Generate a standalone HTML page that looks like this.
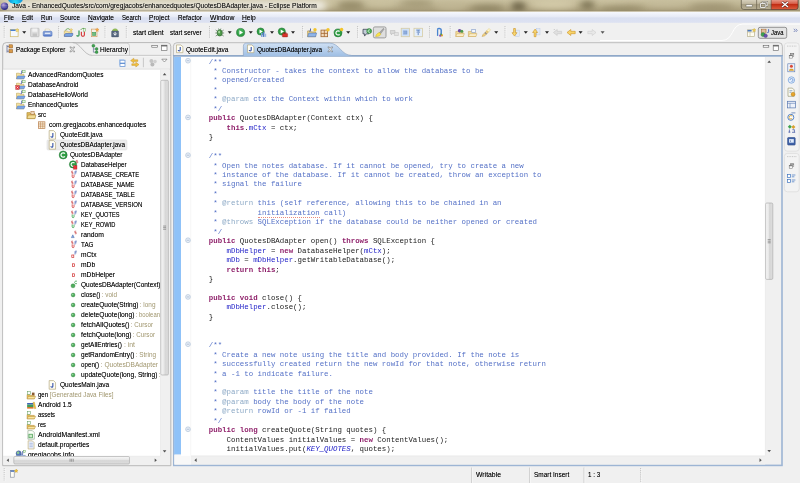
<!DOCTYPE html><html><head><meta charset="utf-8"><title>Java - Eclipse Platform</title><style>
html,body{margin:0;padding:0;}
body{width:800px;height:483px;overflow:hidden;background:#f0f0f0;font-family:"Liberation Sans",sans-serif;font-size:7.5px;color:#000;position:relative;}
.a{position:absolute;}
.t{position:absolute;white-space:pre;line-height:10px;height:10px;transform-origin:0 50%;font-size:7.5px;text-shadow:0 0 .5px rgba(0,0,0,.45);}
#ov{position:absolute;left:0;top:0;}
.code{opacity:.9;position:absolute;font-family:"Liberation Mono",monospace;font-size:7.4px;line-height:9.45px;white-space:pre;color:#000;}
.c{color:#3f5fbf;} .jt{color:#7f9fbf;} .k{color:#7f0055;font-weight:bold;} .f{color:#0000c0;} .sf{color:#0000c0;font-style:italic;}
.sp{border-bottom:0.6px dotted #e88070;}
u{text-decoration:underline;text-decoration-thickness:.5px;text-underline-offset:.8px;text-decoration-color:#444}
</style></head><body>
<div class="a" style="left:0;top:0;width:800px;height:12px;background:linear-gradient(#c9c09f 0%,#bdb391 40%,#aba07e 80%);overflow:hidden;">
<div class="a" style="left:338px;top:1px;width:26px;height:9px;background:#8d8360;border-radius:50%;filter:blur(3px);opacity:0.8"></div>
<div class="a" style="left:300px;top:0px;width:36px;height:8px;background:#d2c9a8;border-radius:50%;filter:blur(3px);opacity:0.8"></div>
<div class="a" style="left:366px;top:0px;width:30px;height:7px;background:#cfc6a4;border-radius:50%;filter:blur(3px);opacity:0.8"></div>
<div class="a" style="left:400px;top:0px;width:34px;height:6px;background:#8f8562;border-radius:50%;filter:blur(3px);opacity:0.7"></div>
<div class="a" style="left:436px;top:2px;width:30px;height:9px;background:#c4ba98;border-radius:50%;filter:blur(3px);opacity:0.7"></div>
<div class="a" style="left:470px;top:5px;width:34px;height:7px;background:#857b5a;border-radius:50%;filter:blur(3px);opacity:0.8"></div>
<div class="a" style="left:511px;top:2px;width:15px;height:9px;background:#665d42;border-radius:50%;filter:blur(3px);opacity:0.9"></div>
<div class="a" style="left:530px;top:0px;width:46px;height:9px;background:#d8cfae;border-radius:50%;filter:blur(3px);opacity:0.85"></div>
<div class="a" style="left:580px;top:1px;width:15px;height:8px;background:#716849;border-radius:50%;filter:blur(3px);opacity:0.85"></div>
<div class="a" style="left:598px;top:0px;width:30px;height:5px;background:#cfc6a4;border-radius:50%;filter:blur(3px);opacity:0.7"></div>
<div class="a" style="left:600px;top:6px;width:44px;height:6px;background:#8d8360;border-radius:50%;filter:blur(3px);opacity:0.8"></div>
<div class="a" style="left:646px;top:0px;width:40px;height:7px;background:#c8bf9e;border-radius:50%;filter:blur(3px);opacity:0.7"></div>
<div class="a" style="left:690px;top:3px;width:44px;height:8px;background:#968b6a;border-radius:50%;filter:blur(3px);opacity:0.7"></div>
<div class="a" style="left:4px;top:1px;width:322px;height:10px;background:#fff;border-radius:5px;filter:blur(3.5px);opacity:.74"></div>
<div class="a" style="left:7.6px;top:-7px;width:15.4px;height:10.8px;border-radius:50%;background:radial-gradient(ellipse at 50% 85%,#22dcf8 0,#14a8e4 45%,#0e78c4 100%);filter:blur(.5px)"></div>
</div>
<svg id="ov" width="800" height="483" viewBox="0 0 800 483">
<path d="M0.00 10.90L800.00 10.90" stroke="#8f8668" stroke-width="1" fill="none" opacity=".5"/>
<path d="M0.00 11.70L800.00 11.70" stroke="#ece8da" stroke-width="0.7" fill="none"/>
<defs><radialGradient id="eg" cx=".35" cy=".3" r=".75"><stop offset="0" stop-color="#b8a0d8"/><stop offset=".5" stop-color="#5a54a8"/><stop offset="1" stop-color="#26267e"/></radialGradient></defs>
<g transform="translate(0.00 1.20)"><circle cx="4.5" cy="5" r="3.7" fill="url(#eg)"/><rect x="1.4" y="4.4" width="6.2" height=".5" fill="#d8d8f0" opacity=".55"/><rect x="1.4" y="5.6" width="6.2" height=".5" fill="#d8d8f0" opacity=".45"/></g>
<defs><linearGradient id="wb" x1="0" y1="0" x2="0" y2="1"><stop offset="0" stop-color="#ddd7c4"/><stop offset=".5" stop-color="#bcb39a"/><stop offset=".52" stop-color="#a69d82"/><stop offset="1" stop-color="#b8af95"/></linearGradient><linearGradient id="wc" x1="0" y1="0" x2="0" y2="1"><stop offset="0" stop-color="#e8a898"/><stop offset=".5" stop-color="#d5533c"/><stop offset=".52" stop-color="#c22c14"/><stop offset="1" stop-color="#dc6040"/></linearGradient></defs>
<path d="M741.3 -1 H798 V7 Q798 9.5 795.5 9.5 H743.8 Q741.3 9.5 741.3 7Z" fill="url(#wb)" stroke="#5a5443" stroke-width=".7"/>
<path d="M771.2 -1 H798 V7 Q798 9.5 795.5 9.5 H771.2Z" fill="url(#wc)" stroke="#5a3a30" stroke-width=".6"/>
<path d="M756.60 0.00L756.60 9.50" stroke="#6a634f" stroke-width="0.7" fill="none"/>
<g transform="translate(741.00 0.00)"><rect x="5" y="4.6" width="6.4" height="2.2" rx=".4" fill="#fff" stroke="#55503f" stroke-width=".5"/><rect x="21.6" y="2" width="4.6" height="3.8" fill="none" stroke="#55503f" stroke-width="1.6"/><rect x="21.6" y="2" width="4.6" height="3.8" fill="none" stroke="#fff" stroke-width=".9"/><rect x="19.6" y="3.6" width="4.6" height="3.8" fill="#b5ac92" stroke="#55503f" stroke-width="1.6"/><rect x="19.6" y="3.6" width="4.6" height="3.8" fill="none" stroke="#fff" stroke-width=".9"/><path d="M41 2 L47 7 M47 2 L41 7" stroke="#5a2018" stroke-width="2.3"/><path d="M41 2 L47 7 M47 2 L41 7" stroke="#fff" stroke-width="1.4"/></g>
<defs><linearGradient id="mb" x1="0" y1="0" x2="0" y2="1"><stop offset="0" stop-color="#f6f8fd"/><stop offset=".45" stop-color="#e6eaf6"/><stop offset=".55" stop-color="#d9dff0"/><stop offset="1" stop-color="#dde2f2"/></linearGradient></defs>
<rect x="0.00" y="12.00" width="800.00" height="10.80" fill="url(#mb)"/>
<path d="M4.20 26.00L4.20 38.00" stroke="#bdbdbd" stroke-width="1" stroke-dasharray=".95 .95" fill="none"/>
<path d="M5.10 26.80L5.10 38.80" stroke="#fdfdfd" stroke-width="0.8" stroke-dasharray=".95 .95" fill="none"/>
<g transform="translate(9.80 27.50)"><rect x=".5" y="2" width="7.8" height="7.2" fill="#f4f8fd" stroke="#d0b868" stroke-width=".7"/><rect x=".6" y="2" width="5.2" height="1.5" fill="#4a80d0"/><path d="M7.4 .8 L7.9 2 L9.2 2.2 L8.2 3.1 L8.5 4.4 L7.4 3.7 L6.3 4.4 L6.6 3.1 L5.6 2.2 L6.9 2Z" fill="#f8e080" stroke="#c8a83c" stroke-width=".35"/></g>
<g transform="translate(22.20 31.30)"><path d="M0 0H4L2 2.4Z" fill="#222"/></g>
<g transform="translate(29.80 27.50)"><rect x=".8" y=".8" width="8.4" height="8.4" rx=".6" fill="#dcdcdc" stroke="#b8b8b8" stroke-width=".7"/><rect x="2.5" y="1" width="5" height="3.2" fill="#f2f2f2"/><rect x="2.8" y="6" width="4.4" height="3" fill="#c4c4c4"/></g>
<g transform="translate(42.60 27.50)"><path d="M2.6 4 V1.6 H6.6 L7.6 2.6 V4Z" fill="#fbfbf4" stroke="#c8b880" stroke-width=".4"/><rect x=".6" y="3.8" width="8.8" height="5" rx="1.2" fill="#86a4de" stroke="#4f72c0" stroke-width=".6"/><rect x="2" y="4.8" width="6" height="2" fill="#dfe8f8" stroke="#6a88c8" stroke-width=".4"/><rect x=".9" y="7.4" width="8.2" height="1.2" fill="#5a7cc8"/></g>
<path d="M58.60 26.00L58.60 38.00" stroke="#bdbdbd" stroke-width="1" stroke-dasharray=".95 .95" fill="none"/>
<path d="M59.50 26.80L59.50 38.80" stroke="#fdfdfd" stroke-width="0.8" stroke-dasharray=".95 .95" fill="none"/>
<g transform="translate(63.50 27.50)"><path d="M.8 3.4 H3.8 L4.6 4.4 H8.4 V8.8 H.8Z" fill="#f4e4a4" stroke="#c0a050" stroke-width=".5"/><path d="M.8 8.9 C.8 6.8 1.6 6 2.4 6 H9.4 C9.4 8 8.6 8.9 7.8 8.9Z" fill="#7aa4e4" stroke="#3a5aa8" stroke-width=".55"/><path d="M2 3 C2.6 .8 5.6 .6 6.4 2.2" fill="none" stroke="#5aa048" stroke-width=".8"/><path d="M7.6 .8 L8 1.9 L9.2 2 L8.3 2.8 L8.6 4 L7.6 3.4 L6.6 4 L6.9 2.8 L6 2 L7.2 1.9Z" fill="#f8dc70" stroke="#c8a030" stroke-width=".3"/></g>
<g transform="translate(76.20 27.50)"><path d="M2.8 3 V7.4 C2.8 9 .8 9 .6 7.6" fill="none" stroke="#3a9a57" stroke-width="1.3"/><path d="M5.2 4.2 V7.6 C5.2 9.2 8.2 9.2 8.2 7.6 V4.2" fill="none" stroke="#d64141" stroke-width="1.2"/><path d="M4.5 2.5 C5.5 .6 7.6 .5 8.6 1.5" fill="none" stroke="#4d9a3b" stroke-width=".7"/><rect x="7.6" y="1" width="2" height="3" fill="#e6f2e6" stroke="#4d9a3b" stroke-width=".4"/></g>
<g transform="translate(89.80 27.50)"><rect x="1.6" y="1.6" width="5.6" height="7.6" fill="#f4f0e6" stroke="#d09858" stroke-width=".6"/><rect x="2.8" y="4.8" width="3.2" height="3.2" fill="#6cc080" stroke="#3a9050" stroke-width=".5"/><path d="M7.4 .4 L7.9 1.6 L9.2 1.8 L8.2 2.7 L8.5 4 L7.4 3.3 L6.3 4 L6.6 2.7 L5.6 1.8 L6.9 1.6Z" fill="#f8a84a" stroke="#d08020" stroke-width=".3"/></g>
<path d="M105.00 26.00L105.00 38.00" stroke="#bdbdbd" stroke-width="1" stroke-dasharray=".95 .95" fill="none"/>
<path d="M105.90 26.80L105.90 38.80" stroke="#fdfdfd" stroke-width="0.8" stroke-dasharray=".95 .95" fill="none"/>
<g transform="translate(110.00 27.50)"><path d="M2.4 3.4 C2.4 .6 7.8 .6 7.8 3.4Z" fill="#9ac45a" stroke="#6a9a3a" stroke-width=".4"/><rect x="1.6" y="3.6" width="7" height="5.8" rx=".5" fill="#586880" stroke="#3a4860" stroke-width=".4"/><path d="M5.1 4.4 V7 M3.6 6 L5.1 7.8 L6.6 6" fill="none" stroke="#f4f4f4" stroke-width="1"/></g>
<path d="M126.30 26.00L126.30 38.00" stroke="#bdbdbd" stroke-width="1" stroke-dasharray=".95 .95" fill="none"/>
<path d="M127.20 26.80L127.20 38.80" stroke="#fdfdfd" stroke-width="0.8" stroke-dasharray=".95 .95" fill="none"/>
<path d="M209.50 26.00L209.50 38.00" stroke="#bdbdbd" stroke-width="1" stroke-dasharray=".95 .95" fill="none"/>
<path d="M210.40 26.80L210.40 38.80" stroke="#fdfdfd" stroke-width="0.8" stroke-dasharray=".95 .95" fill="none"/>
<g transform="translate(214.70 27.50)"><ellipse cx="5" cy="5.4" rx="2.6" ry="3.2" fill="#4f9a4a" stroke="#2a5f2a" stroke-width=".5"/><path d="M1 2.5 L3 4 M9 2.5 L7 4 M.6 5.5 H2.5 M9.4 5.5 H7.5 M1 8.6 L3 7.2 M9 8.6 L7 7.2 M3.8 1 L4.4 2.4 M6.2 1 L5.6 2.4" stroke="#3a5f3a" stroke-width=".6"/><ellipse cx="4.4" cy="4.6" rx="1" ry="1.3" fill="#a8d8a0"/></g>
<g transform="translate(227.70 31.30)"><path d="M0 0H4L2 2.4Z" fill="#222"/></g>
<g transform="translate(235.60 27.50)"><circle cx="5" cy="5" r="4.1" fill="#2f9e44" stroke="#1b6d2c" stroke-width=".5"/><circle cx="5" cy="4" r="3" fill="#58c06a" opacity=".5"/><path d="M3.8 2.8 L7.4 5 L3.8 7.2Z" fill="#fff"/></g>
<g transform="translate(248.80 31.30)"><path d="M0 0H4L2 2.4Z" fill="#222"/></g>
<g transform="translate(256.60 27.50)"><circle cx="4" cy="4" r="3.6" fill="#2f9e44" stroke="#1b6d2c" stroke-width=".5"/><path d="M2.9 2.1 L6.2 4 L2.9 5.9Z" fill="#fff"/><rect x="4.4" y="5.4" width="1.6" height="4" fill="#7ca0d8"/><rect x="6.4" y="4.4" width="1.4" height="5" fill="#4d78c0"/><rect x="8.2" y="6.2" width="1.4" height="3.2" fill="#9ab6e2"/></g>
<g transform="translate(270.00 31.30)"><path d="M0 0H4L2 2.4Z" fill="#222"/></g>
<g transform="translate(277.80 27.50)"><circle cx="4" cy="4" r="3.6" fill="#2f9e44" stroke="#1b6d2c" stroke-width=".5"/><path d="M2.9 2.1 L6.2 4 L2.9 5.9Z" fill="#fff"/><rect x="4.6" y="6" width="5.2" height="3.4" rx=".4" fill="#d8322a" stroke="#8d1914" stroke-width=".4"/><rect x="6.2" y="5" width="2" height="1.2" fill="none" stroke="#8d1914" stroke-width=".5"/></g>
<g transform="translate(291.00 31.30)"><path d="M0 0H4L2 2.4Z" fill="#222"/></g>
<path d="M302.60 26.00L302.60 38.00" stroke="#bdbdbd" stroke-width="1" stroke-dasharray=".95 .95" fill="none"/>
<path d="M303.50 26.80L303.50 38.80" stroke="#fdfdfd" stroke-width="0.8" stroke-dasharray=".95 .95" fill="none"/>
<g transform="translate(307.00 27.50)"><path d="M.6 3.4 H3.6 L4.4 4.4 H8.6 V9.2 H.6Z" fill="#e6d08a" stroke="#a5802a" stroke-width=".5"/><path d="M.6 9.2 L1.8 5.6 H9.6 L8.6 9.2Z" fill="#8fb4e8" stroke="#4b6ea8" stroke-width=".5"/><path d="M3.5 1 V3.2 C3.5 4 2.4 4 2.3 3.3" fill="none" stroke="#3b4fa0" stroke-width=".9"/><circle cx="8" cy="2.2" r="1.7" fill="#f2c42c"/></g>
<g transform="translate(320.00 27.50)"><rect x="1" y="2.6" width="6.6" height="6.6" fill="#f2dcc0" stroke="#a2642d" stroke-width=".8"/><path d="M4.3 2.6 V9.2 M1 5.9 H7.6" stroke="#a2642d" stroke-width=".8"/><circle cx="8" cy="2.2" r="1.7" fill="#f2c42c"/></g>
<g transform="translate(333.40 27.50)"><circle cx="4.6" cy="5.4" r="4" fill="#2f9e44" stroke="#1b6d2c" stroke-width=".5"/><path d="M6.2 4 A2.1 2.1 0 1 0 6.2 6.8" fill="none" stroke="#fff" stroke-width="1.2"/><circle cx="8.2" cy="2" r="1.7" fill="#f2c42c"/></g>
<g transform="translate(346.20 31.30)"><path d="M0 0H4L2 2.4Z" fill="#222"/></g>
<path d="M357.60 26.00L357.60 38.00" stroke="#bdbdbd" stroke-width="1" stroke-dasharray=".95 .95" fill="none"/>
<path d="M358.50 26.80L358.50 38.80" stroke="#fdfdfd" stroke-width="0.8" stroke-dasharray=".95 .95" fill="none"/>
<g transform="translate(362.20 27.50)"><path d="M.8 1.8 H6.6 V6.4 H4 L2.4 8.6 V6.4 H.8Z" fill="#c4ccd8" stroke="#2c3646" stroke-width=".7"/><circle cx="7" cy="3.6" r="2.5" fill="#3fa34f" stroke="#1f6f2c" stroke-width=".4"/><path d="M7.9 2.7 A1.25 1.25 0 1 0 7.9 4.5" fill="none" stroke="#fff" stroke-width=".7"/></g>
<rect x="373.40" y="26.90" width="12.60" height="11.00" fill="#dedede" stroke="#8c8c8c" stroke-width="0.8" rx="1.5"/>
<g transform="translate(374.80 27.50)"><path d="M4.4 5.4 L8.6 .8 L9.4 1.6 L5.6 6.6Z" fill="#a8a8a8" stroke="#7a7a7a" stroke-width=".4"/><path d="M.8 9 C1.2 7 3 5.4 4.6 5 L6 6.6 C5.6 8.4 3.4 9.2 .8 9Z" fill="#f8e24a" stroke="#c4a81c" stroke-width=".4"/></g>
<g transform="translate(389.40 27.50)"><path d="M1 3 H5.6 V6 H3 L2 7.4 V6 H1Z" fill="#dadada" stroke="#b5b5b5" stroke-width=".5"/><path d="M5 5 H9 V8 H5Z" fill="#e2e2e2" stroke="#bcbcbc" stroke-width=".5"/></g>
<g transform="translate(400.40 27.50)"><rect x=".8" y=".8" width="8.4" height="8.4" fill="#cfe0f6" stroke="#d6cca4" stroke-width=".8"/><rect x="3.4" y="3.4" width="3.2" height="3.2" fill="#8eacdc" stroke="#6a8cc8" stroke-width=".4"/></g>
<g transform="translate(413.20 27.50)"><rect x=".8" y=".8" width="8.4" height="8.4" fill="#e4eefa" stroke="#d6cca4" stroke-width=".8"/><path d="M3 2.6 H7 M5 2.6 V7.6 M3.4 4.6 h1 M5.8 4.6 h1" stroke="#5a80c0" stroke-width=".9"/></g>
<path d="M429.60 26.00L429.60 38.00" stroke="#bdbdbd" stroke-width="1" stroke-dasharray=".95 .95" fill="none"/>
<path d="M430.50 26.80L430.50 38.80" stroke="#fdfdfd" stroke-width="0.8" stroke-dasharray=".95 .95" fill="none"/>
<g transform="translate(435.00 27.50)"><path d="M2.6 1.6 C2.6 .8 6.2 .8 6.2 2.4 V6.4" fill="none" stroke="#4a84d0" stroke-width="1.5"/><path d="M2.6 1.6 V8.4" stroke="#4a84d0" stroke-width="1.3"/><circle cx="6.8" cy="7.8" r="1.2" fill="#e6a52c"/><circle cx="5.2" cy="8.2" r="1.1" fill="#8a4fb5"/><circle cx="6" cy="6.8" r=".9" fill="#4d9a4b"/></g>
<path d="M450.20 26.00L450.20 38.00" stroke="#bdbdbd" stroke-width="1" stroke-dasharray=".95 .95" fill="none"/>
<path d="M451.10 26.80L451.10 38.80" stroke="#fdfdfd" stroke-width="0.8" stroke-dasharray=".95 .95" fill="none"/>
<g transform="translate(455.00 27.50)"><path d="M.8 4 H3.6 L4.4 5 H8.2 V9 H.8Z" fill="#f2dc9c" stroke="#c8a050" stroke-width=".5"/><path d="M.8 9 L2 6.2 H9.4 L8.2 9Z" fill="#fbeec8" stroke="#c8a050" stroke-width=".45"/><circle cx="4.6" cy="3.2" r="1.8" fill="#6a4aa8"/><circle cx="6.8" cy="3.8" r="1.5" fill="#4d9a4b"/></g>
<g transform="translate(467.60 27.50)"><path d="M.8 4 H3.6 L4.4 5 H8.2 V9 H.8Z" fill="#f2dc9c" stroke="#c8a050" stroke-width=".5"/><path d="M.8 9 L2 6.2 H9.4 L8.2 9Z" fill="#fbeec8" stroke="#c8a050" stroke-width=".45"/><rect x="4.2" y="2.2" width="3.6" height="3" fill="#f4f8fd" stroke="#6a88c0" stroke-width=".5"/></g>
<g transform="translate(481.00 27.50)"><path d="M1 9 L2 7 L6 3 L7.6 4.6 L3.6 8.4Z" fill="#f0d080" stroke="#b89040" stroke-width=".4"/><path d="M4 5 L5.6 6.6" stroke="#8a8a8a" stroke-width="1.2"/><path d="M6 3 L8 1 L9.4 2.4 L7.6 4.6Z" fill="#fff8d0" stroke="#d8b850" stroke-width=".4"/></g>
<g transform="translate(494.20 31.30)"><path d="M0 0H4L2 2.4Z" fill="#222"/></g>
<path d="M505.00 26.00L505.00 38.00" stroke="#bdbdbd" stroke-width="1" stroke-dasharray=".95 .95" fill="none"/>
<path d="M505.90 26.80L505.90 38.80" stroke="#fdfdfd" stroke-width="0.8" stroke-dasharray=".95 .95" fill="none"/>
<g transform="translate(510.40 27.50)"><rect x="5.4" y="2.6" width="3.6" height="6.6" fill="#e2eaf6" stroke="#b4c4e0" stroke-width=".4"/><path d="M3.2 1 H5 V5.2 H6.6 L4.1 8.6 L1.6 5.2 H3.2Z" fill="#f8d870" stroke="#c88a18" stroke-width=".55"/></g>
<g transform="translate(523.80 31.30)"><path d="M0 0H4L2 2.4Z" fill="#222"/></g>
<g transform="translate(531.00 27.50)"><rect x="5.4" y=".8" width="3.6" height="6.6" fill="#e2eaf6" stroke="#b4c4e0" stroke-width=".4"/><path d="M3.2 9.2 H5 V5 H6.6 L4.1 1.6 L1.6 5 H3.2Z" fill="#f8d870" stroke="#c88a18" stroke-width=".55"/></g>
<g transform="translate(545.00 31.30)"><path d="M0 0H4L2 2.4Z" fill="#222"/></g>
<g transform="translate(552.40 27.50)"><path d="M9.2 3.8 H4.8 V2 L1 5 L4.8 8 V6.2 H9.2Z" fill="#e0e0e0" stroke="#c0c0c0" stroke-width=".5"/><path d="M1.4 1.6 l1 1 m0 -1 l-1 1" stroke="#b8b8b8" stroke-width=".5"/></g>
<g transform="translate(566.00 27.50)"><path d="M9.2 3.8 H4.8 V2 L1 5 L4.8 8 V6.2 H9.2Z" fill="#f8d468" stroke="#c88a18" stroke-width=".55"/></g>
<g transform="translate(578.60 31.30)"><path d="M0 0H4L2 2.4Z" fill="#222"/></g>
<g transform="translate(587.00 27.50)"><path d="M.8 3.8 H5.2 V2 L9 5 L5.2 8 V6.2 H.8Z" fill="#e8e8e8" stroke="#c8c8c8" stroke-width=".5"/></g>
<g transform="translate(600.60 31.30)"><path d="M0 0H4L2 2.4Z" fill="#555"/></g>
<path d="M600 40.5 H722 C734 40.5 731 24 743 24 H800" fill="none" stroke="#fff" stroke-width="1"/>
<g transform="translate(746.80 27.50)"><rect x=".8" y="2.4" width="6.8" height="6.4" fill="#fffdf0" stroke="#b0a880" stroke-width=".6"/><path d="M.8 4.6 H7.6 M3.2 4.6 V8.8" stroke="#b0a880" stroke-width=".5"/><rect x=".8" y="2.4" width="4" height="1.6" fill="#4a78c0"/><path d="M7.4 .8 L7.9 2 L9.2 2.2 L8.2 3 L8.5 4.3 L7.4 3.6 L6.3 4.3 L6.6 3 L5.6 2.2 L6.9 2Z" fill="#f6d24a" stroke="#c09a20" stroke-width=".3"/></g>
<rect x="758.30" y="27.30" width="28.40" height="11.00" fill="#e4e4e4" stroke="#7c7c7c" stroke-width="0.8" rx="1.8"/>
<g transform="translate(760.40 27.80)"><rect x="1.2" y="1.4" width="4.4" height="3.8" fill="#f2dcc0" stroke="#a2642d" stroke-width=".6"/><path d="M1.2 3.2 H5.6" stroke="#a2642d" stroke-width=".5"/><circle cx="2.6" cy="6.8" r="2" fill="#3fa34f" stroke="#1f6f2c" stroke-width=".4"/><circle cx="5.2" cy="8" r="1.8" fill="#6b4fb0" stroke="#3f2c7a" stroke-width=".4"/><path d="M8.2 1.4 V4 C8.2 5 7 5 6.9 4.2" fill="none" stroke="#3b5ab8" stroke-width=".9"/></g>
<g transform="translate(793.60 28.40)"><path d="M.2 .4 L1.6 2 L.2 3.6 M2.2 .4 L3.6 2 L2.2 3.6" fill="none" stroke="#3b4fa0" stroke-width=".6"/></g>
<path d="M2.7 465.7 V46.2 Q2.7 42.6 6.300000000000001 42.6 H167.20000000000002 Q170.8 42.6 170.8 46.2 V465.7Z" fill="#f0f0f0" stroke="#aaaaaa" stroke-width=".8"/>
<path d="M72.6 42.6 C80.6 42.6 83.6 55.4 92.4 55.4 H170.8" fill="none" stroke="#a8a8a8" stroke-width=".7"/>
<path d="M92.4 56.1 H170.4" fill="none" stroke="#fbfbfb" stroke-width=".6"/>
<path d="M129.5 55.4 V45.8 Q129.5 43.2 126.6 43.2 H76" fill="none" stroke="#bcbcbc" stroke-width=".6"/>
<g transform="translate(5.60 44.00)"><rect x="3.4" y=".8" width="3.6" height="3.2" fill="#d89a4a" stroke="#8f5a20" stroke-width=".5"/><rect x="3.4" y="5.6" width="3.6" height="3.2" fill="#d89a4a" stroke="#8f5a20" stroke-width=".5"/><path d="M1.4 1 V8.6 M1.4 2.4 H3.4 M1.4 7.2 H3.4" stroke="#56608a" stroke-width=".7" fill="none"/></g>
<g transform="translate(69.40 46.50)"><path transform="scale(1.16)" d="M.4 .4 L1.6 .4 L2.5 1.6 L3.4 .4 L4.6 .4 L3.2 2.5 L4.6 4.6 L3.4 4.6 L2.5 3.4 L1.6 4.6 L.4 4.6 L1.8 2.5Z" fill="#fafafa" stroke="#606060" stroke-width=".45"/></g>
<g transform="translate(90.40 44.00)"><circle cx="3" cy="1.8" r="1.5" fill="#3fa34f" stroke="#1f6f2c" stroke-width=".4"/><circle cx="6.2" cy="5" r="1.4" fill="#3fa34f" stroke="#1f6f2c" stroke-width=".4"/><circle cx="6.2" cy="8.2" r="1.4" fill="#3fa34f" stroke="#1f6f2c" stroke-width=".4"/><path d="M3 3.4 V8.2 H4.8 M3 5 H4.8" stroke="#56608a" stroke-width=".6" fill="none"/></g>
<g transform="translate(151.40 45.00)"><rect x=".4" y=".4" width="5.6" height="1.8" fill="#fff" stroke="#606060" stroke-width=".6"/></g>
<g transform="translate(161.20 44.80)"><rect x=".4" y=".4" width="5.4" height="5.2" fill="#fff" stroke="#606060" stroke-width=".6"/><rect x=".4" y=".4" width="5.4" height="1.2" fill="#606060"/></g>
<g transform="translate(118.80 58.00)"><rect x=".2" y="1.2" width="5" height="6" fill="#c4d8f0"/><rect x="1.2" y="2.2" width="5" height="6.2" fill="#fff" stroke="#6c98d6" stroke-width=".8"/><rect x="1.2" y="4.7" width="5" height="1.2" fill="#5a8ad0"/></g>
<g transform="translate(129.80 57.60)"><path d="M8 2.2 H4 V.6 L.8 3 L4 5.4 V3.8 H8Z" fill="#f2c040" stroke="#c08a18" stroke-width=".4"/><path d="M2 6.2 H6 V4.6 L9.2 7 L6 9.4 V7.8 H2Z" fill="#f2c040" stroke="#c08a18" stroke-width=".4"/></g>
<path d="M143.40 57.80L143.40 67.20" stroke="#bdbdbd" stroke-width="0.8" fill="none"/>
<g transform="translate(148.40 58.00)"><circle cx="3" cy="3" r="2" fill="#c4c4c4"/><circle cx="6.6" cy="3.6" r="1.8" fill="#d0d0d0"/><circle cx="4" cy="6.4" r="2" fill="#b8b8b8"/></g>
<g transform="translate(161.40 58.80)"><path d="M.4 .4 H5.6 L3 3.2Z" fill="#fff" stroke="#5a5a5a" stroke-width=".55"/></g>
<rect x="3.20" y="69.40" width="157.10" height="386.60" fill="#fff"/>
<path d="M3.20 69.10L170.40 69.10" stroke="#d4d4d4" stroke-width="0.6" fill="none"/>
<defs><clipPath id="tc"><rect x="3.2" y="69.4" width="157.10000000000002" height="386.6"/></clipPath></defs><g clip-path="url(#tc)">
<g transform="translate(15.70 70.00)"><path d="M.8 3.2 H3.6 L4.4 4.2 H8.2 V8.8 H.8Z" fill="#f2e0a0" stroke="#b89a48" stroke-width=".5"/><path d="M.8 8.8 L2 6 H9.4 L8.2 8.8Z" fill="#7aa6e8" stroke="#4b74b8" stroke-width=".45"/><path d="M6 .6 V3 C6 3.8 5 3.8 4.9 3.1" fill="none" stroke="#3b4fa0" stroke-width=".8"/><rect x="7" y=".4" width="2.4" height="2.4" fill="#eaf3ea" stroke="#4d9a3b" stroke-width=".4"/></g>
<g transform="translate(15.70 80.00)"><path d="M.8 3.2 H3.6 L4.4 4.2 H8.2 V8.8 H.8Z" fill="#f2e0a0" stroke="#b89a48" stroke-width=".5"/><path d="M.8 8.8 L2 6 H9.4 L8.2 8.8Z" fill="#7aa6e8" stroke="#4b74b8" stroke-width=".45"/><path d="M6 .6 V3 C6 3.8 5 3.8 4.9 3.1" fill="none" stroke="#3b4fa0" stroke-width=".8"/><rect x="7" y=".4" width="2.4" height="2.4" fill="#eaf3ea" stroke="#4d9a3b" stroke-width=".4"/><rect x="0" y="5.6" width="3.6" height="3.8" fill="#e8323a" stroke="#9a1218" stroke-width=".3"/><path d="M.9 6.6 l1.8 1.8 m0 -1.8 l-1.8 1.8" stroke="#fff" stroke-width=".6"/></g>
<g transform="translate(15.70 90.00)"><path d="M.8 3.2 H3.6 L4.4 4.2 H8.2 V8.8 H.8Z" fill="#f2e0a0" stroke="#b89a48" stroke-width=".5"/><path d="M.8 8.8 L2 6 H9.4 L8.2 8.8Z" fill="#7aa6e8" stroke="#4b74b8" stroke-width=".45"/><path d="M6 .6 V3 C6 3.8 5 3.8 4.9 3.1" fill="none" stroke="#3b4fa0" stroke-width=".8"/><rect x="7" y=".4" width="2.4" height="2.4" fill="#eaf3ea" stroke="#4d9a3b" stroke-width=".4"/></g>
<g transform="translate(15.70 100.00)"><path d="M.8 3.2 H3.6 L4.4 4.2 H8.2 V8.8 H.8Z" fill="#f2e0a0" stroke="#b89a48" stroke-width=".5"/><path d="M.8 8.8 L2 6 H9.4 L8.2 8.8Z" fill="#7aa6e8" stroke="#4b74b8" stroke-width=".45"/><path d="M6 .6 V3 C6 3.8 5 3.8 4.9 3.1" fill="none" stroke="#3b4fa0" stroke-width=".8"/><rect x="7" y=".4" width="2.4" height="2.4" fill="#eaf3ea" stroke="#4d9a3b" stroke-width=".4"/></g>
<g transform="translate(26.32 110.00)"><path d="M.6 2.6 H3.6 L4.4 3.6 H8.6 V8.6 H.6Z" fill="#e2bc5e" stroke="#a5802a" stroke-width=".55"/><path d="M.6 8.6 L1.9 5 H9.6 L8.6 8.6Z" fill="#f2dc96" stroke="#a5802a" stroke-width=".5"/><rect x="4.6" y="1.4" width="3.2" height="3" fill="#f2dcc0" stroke="#a2642d" stroke-width=".5"/></g>
<g transform="translate(36.94 120.00)"><rect x="1.4" y="1.8" width="6.6" height="6.6" fill="#f8ead4" stroke="#b0713a" stroke-width=".6"/><path d="M3.6 1.8 V8.4 M5.8 1.8 V8.4 M1.4 4 H8 M1.4 6.2 H8" stroke="#b0713a" stroke-width=".45"/></g>
<g transform="translate(47.56 130.00)"><path d="M1.6 .6 H6 L8 2.6 V9.2 H1.6Z" fill="#fffef4" stroke="#a89a6a" stroke-width=".6"/><path d="M5.3 3 V6.3 C5.3 7.6 3.4 7.6 3.3 6.3" fill="none" stroke="#2a48a8" stroke-width="1.05"/></g>
<rect x="46.96" y="139.90" width="80.00" height="10.10" fill="#ececec" stroke="#dadada" stroke-width="0.5" rx="1.2"/>
<g transform="translate(47.56 140.00)"><path d="M1.6 .6 H6 L8 2.6 V9.2 H1.6Z" fill="#fffef4" stroke="#a89a6a" stroke-width=".6"/><path d="M5.3 3 V6.3 C5.3 7.6 3.4 7.6 3.3 6.3" fill="none" stroke="#2a48a8" stroke-width="1.05"/></g>
<g transform="translate(58.18 150.00)"><circle cx="5" cy="5" r="4" fill="#2f9e44" stroke="#1b6d2c" stroke-width=".5"/><path d="M6.7 3.6 A2.2 2.2 0 1 0 6.7 6.4" fill="none" stroke="#fff" stroke-width="1.2"/></g>
<g transform="translate(68.80 160.00)"><circle cx="4.2" cy="4.4" r="3.6" fill="#2f9e44" stroke="#1b6d2c" stroke-width=".5"/><path d="M5.7 3.2 A1.9 1.9 0 1 0 5.7 5.6" fill="none" stroke="#fff" stroke-width="1.1"/><rect x="4.6" y="5.6" width="3.6" height="3.6" fill="#e8323a" stroke="#9a1218" stroke-width=".3"/><path d="M7.4 .4 h1.6 M7.4 .4 v1.2 h1.6 v1.2 h-1.6" stroke="#c02020" stroke-width=".5" fill="none"/></g>
<g transform="translate(68.80 170.00)"><path d="M3.4 4.6 V6.8 C3.4 8 5.2 8 5.2 6.8 V4.6" fill="none" stroke="#d03030" stroke-width=".8"/><path d="M4.2 1.2 H2.8 V2.5 H4.2 V3.8 H2.8" stroke="#c02020" stroke-width=".55" fill="none"/><path d="M6.2 4.6 V1.2 H8.2 M6.2 2.8 H7.8" stroke="#2f4fa8" stroke-width=".6" fill="none"/></g>
<g transform="translate(68.80 180.00)"><path d="M3.4 4.6 V6.8 C3.4 8 5.2 8 5.2 6.8 V4.6" fill="none" stroke="#d03030" stroke-width=".8"/><path d="M4.2 1.2 H2.8 V2.5 H4.2 V3.8 H2.8" stroke="#c02020" stroke-width=".55" fill="none"/><path d="M6.2 4.6 V1.2 H8.2 M6.2 2.8 H7.8" stroke="#2f4fa8" stroke-width=".6" fill="none"/></g>
<g transform="translate(68.80 190.00)"><path d="M3.4 4.6 V6.8 C3.4 8 5.2 8 5.2 6.8 V4.6" fill="none" stroke="#d03030" stroke-width=".8"/><path d="M4.2 1.2 H2.8 V2.5 H4.2 V3.8 H2.8" stroke="#c02020" stroke-width=".55" fill="none"/><path d="M6.2 4.6 V1.2 H8.2 M6.2 2.8 H7.8" stroke="#2f4fa8" stroke-width=".6" fill="none"/></g>
<g transform="translate(68.80 200.00)"><path d="M3.4 4.6 V6.8 C3.4 8 5.2 8 5.2 6.8 V4.6" fill="none" stroke="#d03030" stroke-width=".8"/><path d="M4.2 1.2 H2.8 V2.5 H4.2 V3.8 H2.8" stroke="#c02020" stroke-width=".55" fill="none"/><path d="M6.2 4.6 V1.2 H8.2 M6.2 2.8 H7.8" stroke="#2f4fa8" stroke-width=".6" fill="none"/></g>
<g transform="translate(68.80 210.00)"><path d="M3.4 4.6 V6.8 C3.4 8 5.2 8 5.2 6.8 V4.6" fill="none" stroke="#2f9e44" stroke-width=".8"/><path d="M4.2 1.2 H2.8 V2.5 H4.2 V3.8 H2.8" stroke="#c02020" stroke-width=".55" fill="none"/><path d="M6.2 4.6 V1.2 H8.2 M6.2 2.8 H7.8" stroke="#2f4fa8" stroke-width=".6" fill="none"/></g>
<g transform="translate(68.80 220.00)"><path d="M3.4 4.6 V6.8 C3.4 8 5.2 8 5.2 6.8 V4.6" fill="none" stroke="#2f9e44" stroke-width=".8"/><path d="M4.2 1.2 H2.8 V2.5 H4.2 V3.8 H2.8" stroke="#c02020" stroke-width=".55" fill="none"/><path d="M6.2 4.6 V1.2 H8.2 M6.2 2.8 H7.8" stroke="#2f4fa8" stroke-width=".6" fill="none"/></g>
<g transform="translate(68.80 230.00)"><path d="M2.6 7.6 L4 4.8 L5.4 7.6Z" fill="#8ab0e4" stroke="#3f62a8" stroke-width=".5"/><path d="M7.4 1.2 H6 V2.5 H7.4 V3.8 H6" stroke="#c02020" stroke-width=".55" fill="none"/></g>
<g transform="translate(68.80 240.00)"><path d="M3.4 4.6 V6.8 C3.4 8 5.2 8 5.2 6.8 V4.6" fill="none" stroke="#d03030" stroke-width=".8"/><path d="M4.2 1.2 H2.8 V2.5 H4.2 V3.8 H2.8" stroke="#c02020" stroke-width=".55" fill="none"/><path d="M6.2 4.6 V1.2 H8.2 M6.2 2.8 H7.8" stroke="#2f4fa8" stroke-width=".6" fill="none"/></g>
<g transform="translate(68.80 250.00)"><rect x="3" y="5" width="2" height="2.6" fill="#fff" stroke="#d03030" stroke-width=".7"/><path d="M6.2 4.6 V1.2 H8.2 M6.2 2.8 H7.8" stroke="#2f4fa8" stroke-width=".6" fill="none"/></g>
<g transform="translate(68.80 260.00)"><rect x="3.8" y="3.8" width="2" height="2.6" fill="#fff" stroke="#d03030" stroke-width=".7"/></g>
<g transform="translate(68.80 270.00)"><rect x="3.8" y="3.8" width="2" height="2.6" fill="#fff" stroke="#d03030" stroke-width=".7"/></g>
<g transform="translate(68.80 280.00)"><circle cx="4.2" cy="5.8" r="2" fill="#4fae5c" stroke="#2a7a38" stroke-width=".4"/><path d="M8.2 1.4 A1.4 1.4 0 1 0 8.2 3.4" fill="none" stroke="#2f9e44" stroke-width=".7"/></g>
<g transform="translate(68.80 290.00)"><circle cx="4.3" cy="5" r="1.9" fill="#4fae5c" stroke="#2a7a38" stroke-width=".4"/><circle cx="3.9" cy="4.6" r=".8" fill="#8fd49a"/></g>
<g transform="translate(68.80 300.00)"><circle cx="4.3" cy="5" r="1.9" fill="#4fae5c" stroke="#2a7a38" stroke-width=".4"/><circle cx="3.9" cy="4.6" r=".8" fill="#8fd49a"/></g>
<g transform="translate(68.80 310.00)"><circle cx="4.3" cy="5" r="1.9" fill="#4fae5c" stroke="#2a7a38" stroke-width=".4"/><circle cx="3.9" cy="4.6" r=".8" fill="#8fd49a"/></g>
<g transform="translate(68.80 320.00)"><circle cx="4.3" cy="5" r="1.9" fill="#4fae5c" stroke="#2a7a38" stroke-width=".4"/><circle cx="3.9" cy="4.6" r=".8" fill="#8fd49a"/></g>
<g transform="translate(68.80 330.00)"><circle cx="4.3" cy="5" r="1.9" fill="#4fae5c" stroke="#2a7a38" stroke-width=".4"/><circle cx="3.9" cy="4.6" r=".8" fill="#8fd49a"/></g>
<g transform="translate(68.80 340.00)"><circle cx="4.3" cy="5" r="1.9" fill="#4fae5c" stroke="#2a7a38" stroke-width=".4"/><circle cx="3.9" cy="4.6" r=".8" fill="#8fd49a"/></g>
<g transform="translate(68.80 350.00)"><circle cx="4.3" cy="5" r="1.9" fill="#4fae5c" stroke="#2a7a38" stroke-width=".4"/><circle cx="3.9" cy="4.6" r=".8" fill="#8fd49a"/></g>
<g transform="translate(68.80 360.00)"><circle cx="4.3" cy="5" r="1.9" fill="#4fae5c" stroke="#2a7a38" stroke-width=".4"/><circle cx="3.9" cy="4.6" r=".8" fill="#8fd49a"/></g>
<g transform="translate(68.80 370.00)"><circle cx="4.3" cy="5" r="1.9" fill="#4fae5c" stroke="#2a7a38" stroke-width=".4"/><circle cx="3.9" cy="4.6" r=".8" fill="#8fd49a"/></g>
<g transform="translate(47.56 380.00)"><path d="M1.6 .6 H6 L8 2.6 V9.2 H1.6Z" fill="#fffef4" stroke="#a89a6a" stroke-width=".6"/><path d="M5.3 3 V6.3 C5.3 7.6 3.4 7.6 3.3 6.3" fill="none" stroke="#2a48a8" stroke-width="1.05"/></g>
<g transform="translate(26.32 390.00)"><path d="M.8 4.6 H3.4 L4.2 5.4 H8 V8.8 H.8Z" fill="#e8bc58" stroke="#b08830" stroke-width=".5"/><path d="M.8 8.8 L2 6.4 H9.4 L8 8.8Z" fill="#f8e4a0" stroke="#b08830" stroke-width=".45"/><rect x="1.2" y="1.4" width="3" height="3" fill="#f8fcf8" stroke="#5a9a58" stroke-width=".5"/><rect x="5.6" y="2.6" width="2.6" height="2.6" fill="#8a5a30"/></g>
<g transform="translate(26.32 400.00)"><rect x=".8" y="3" width="6.4" height="1.6" fill="#3f62b8"/><rect x=".8" y="4.6" width="6.4" height="2.4" fill="#3f9a5a"/><rect x=".8" y="7" width="6.4" height="1.6" fill="#d8762c"/><path d="M6.6 2.4 L8 2 L9.6 8.4 L8.2 8.8Z" fill="#f0c040" stroke="#b08820" stroke-width=".3"/></g>
<g transform="translate(26.32 410.00)"><path d="M.8 4.6 H3.4 L4.2 5.4 H8 V8.8 H.8Z" fill="#e8bc58" stroke="#b08830" stroke-width=".5"/><path d="M.8 8.8 L2 6.4 H9.4 L8 8.8Z" fill="#f8e4a0" stroke="#b08830" stroke-width=".45"/><rect x="1.2" y="1.4" width="3" height="3" fill="#f8fcf8" stroke="#5a9a58" stroke-width=".5"/></g>
<g transform="translate(26.32 420.00)"><path d="M.8 4.6 H3.4 L4.2 5.4 H8 V8.8 H.8Z" fill="#e8bc58" stroke="#b08830" stroke-width=".5"/><path d="M.8 8.8 L2 6.4 H9.4 L8 8.8Z" fill="#f8e4a0" stroke="#b08830" stroke-width=".45"/><rect x="1.2" y="1.4" width="3" height="3" fill="#f8fcf8" stroke="#5a9a58" stroke-width=".5"/></g>
<g transform="translate(26.32 430.00)"><path d="M1.6 .6 H6 L8 2.6 V9.2 H1.6Z" fill="#fbfff8" stroke="#8aa08a" stroke-width=".6"/><rect x="2.6" y="4.2" width="3.6" height="3.6" fill="#cfeacb" stroke="#3f9a4a" stroke-width=".7"/></g>
<g transform="translate(26.32 440.00)"><path d="M1.8 .8 H6 L7.8 2.6 V9 H1.8Z" fill="#e6ecf8" stroke="#c4ac6c" stroke-width=".6"/><path d="M3.2 3.4 H6.4 M3.2 5 H6.4 M3.2 6.6 H6.4" stroke="#a4b4dc" stroke-width=".7"/></g>
<g transform="translate(15.70 450.00)"><circle cx="3" cy="3.4" r="2.6" fill="#5a78b8" stroke="#2f4a80" stroke-width=".4"/><circle cx="2.4" cy="2.8" r="1.2" fill="#8fd08f"/><path d="M7 1 V4 C7 5 6 5 5.9 4.2" fill="none" stroke="#3b4fa0" stroke-width=".8"/><rect x="7.6" y=".6" width="2" height="2" fill="#eaf3ea" stroke="#4d9a3b" stroke-width=".4"/><path d="M.6 9 V5.4 H9.6 V9Z" fill="#8eb2e4" stroke="#4b6ea8" stroke-width=".5"/></g>
</g>
<defs><linearGradient id="vt" x1="0" y1="0" x2="1" y2="0"><stop offset="0" stop-color="#f8f8f8"/><stop offset=".45" stop-color="#e6e6e6"/><stop offset=".55" stop-color="#d6d6d6"/><stop offset="1" stop-color="#dedede"/></linearGradient><linearGradient id="ht" x1="0" y1="0" x2="0" y2="1"><stop offset="0" stop-color="#f8f8f8"/><stop offset=".45" stop-color="#e6e6e6"/><stop offset=".55" stop-color="#d6d6d6"/><stop offset="1" stop-color="#dedede"/></linearGradient></defs>
<rect x="160.30" y="69.40" width="8.60" height="386.60" fill="#f0f0f0"/>
<path d="M160.50 69.40L160.50 456.00" stroke="#e6e6e6" stroke-width="0.5" fill="none"/>
<g transform="translate(162.80 73.00)"><path d="M0 2.2H3.6L1.8 0Z" fill="#505050"/></g>
<g transform="translate(162.80 450.20)"><path d="M0 0H3.6L1.8 2.2Z" fill="#505050"/></g>
<rect x="160.80" y="80.30" width="7.60" height="294.70" fill="url(#vt)" stroke="#a6a6a6" stroke-width="0.6" rx="1.2"/>
<path d="M163.10 226.05L166.10 226.05" stroke="#6a6a6a" stroke-width="0.6" fill="none"/>
<path d="M163.10 227.65L166.10 227.65" stroke="#6a6a6a" stroke-width="0.6" fill="none"/>
<path d="M163.10 229.25L166.10 229.25" stroke="#6a6a6a" stroke-width="0.6" fill="none"/>
<rect x="3.20" y="456.00" width="157.10" height="8.50" fill="#f0f0f0"/>
<path d="M3.20 456.20L160.30 456.20" stroke="#e6e6e6" stroke-width="0.5" fill="none"/>
<g transform="translate(6.60 458.45)"><path d="M2.2 0V3.6L0 1.8Z" fill="#505050"/></g>
<g transform="translate(154.70 458.45)"><path d="M0 0V3.6L2.2 1.8Z" fill="#505050"/></g>
<rect x="13.80" y="456.50" width="115.70" height="7.50" fill="url(#ht)" stroke="#a6a6a6" stroke-width="0.6" rx="1.2"/>
<path d="M70.05 458.75L70.05 461.75" stroke="#6a6a6a" stroke-width="0.6" fill="none"/>
<path d="M71.65 458.75L71.65 461.75" stroke="#6a6a6a" stroke-width="0.6" fill="none"/>
<path d="M73.25 458.75L73.25 461.75" stroke="#6a6a6a" stroke-width="0.6" fill="none"/>
<path d="M173.4 56 V46.300000000000004 Q173.4 42.7 177.0 42.7 H778.8 Q782.4 42.7 782.4 46.300000000000004 V56" fill="#f0f0f0" stroke="#b0b0b0" stroke-width=".8"/>
<rect x="173.8" y="55.9" width="608.2" height="409.5" fill="#f0f0f0" stroke="#9db5d4" stroke-width="1.6"/>
<path d="M173.00 55.60L782.80 55.60" stroke="#8fa8c8" stroke-width="1.1" fill="none"/>
<defs><linearGradient id="tg" x1="0" y1="0" x2="0" y2="1"><stop offset="0" stop-color="#cfe0f4"/><stop offset="1" stop-color="#9fbfe4"/></linearGradient></defs>
<path d="M243.4 56 V46.2 C243.4 44.2 244.6 43.1 246.6 43.1 H329.4 C339.4 43.1 341.4 55.4 351.4 55.4 V56Z" fill="url(#tg)"/>
<path d="M243.4 56 V46.2 C243.4 44.2 244.6 43.1 246.6 43.1 H329.4 C339.4 43.1 341.4 55.4 351.4 55.4" fill="none" stroke="#8fa6c4" stroke-width=".7"/>
<g transform="translate(174.90 44.40)"><g transform="scale(1 .9)"><path d="M1.6 .6 H6 L8 2.6 V9.2 H1.6Z" fill="#fffef4" stroke="#a89a6a" stroke-width=".6"/><path d="M5.3 3 V6.3 C5.3 7.6 3.4 7.6 3.3 6.3" fill="none" stroke="#2a48a8" stroke-width="1.05"/></g></g>
<g transform="translate(245.90 44.40)"><g transform="scale(1 .9)"><path d="M1.6 .6 H6 L8 2.6 V9.2 H1.6Z" fill="#fffef4" stroke="#a89a6a" stroke-width=".6"/><path d="M5.3 3 V6.3 C5.3 7.6 3.4 7.6 3.3 6.3" fill="none" stroke="#2a48a8" stroke-width="1.05"/></g></g>
<g transform="translate(327.40 46.50)"><path transform="scale(1.16)" d="M.4 .4 L1.6 .4 L2.5 1.6 L3.4 .4 L4.6 .4 L3.2 2.5 L4.6 4.6 L3.4 4.6 L2.5 3.4 L1.6 4.6 L.4 4.6 L1.8 2.5Z" fill="#fafafa" stroke="#606060" stroke-width=".45"/></g>
<g transform="translate(762.80 45.00)"><rect x=".4" y=".4" width="5.6" height="1.8" fill="#fff" stroke="#606060" stroke-width=".6"/></g>
<g transform="translate(772.80 44.80)"><rect x=".4" y=".4" width="5.4" height="5.2" fill="#fff" stroke="#606060" stroke-width=".6"/><rect x=".4" y=".4" width="5.4" height="1.2" fill="#606060"/></g>
<rect x="174.20" y="57.00" width="6.80" height="397.60" fill="#8fc2f8"/>
<rect x="174.20" y="454.60" width="16.80" height="10.00" fill="#f8f8f8"/>
<rect x="181.00" y="57.00" width="584.10" height="398.80" fill="#fff"/>
<path d="M190.70 57.00L190.70 455.80" stroke="#f0f0f0" stroke-width="0.6" fill="none"/>
<g transform="translate(185.20 57.90)"><circle cx="2.8" cy="2.8" r="2.4" fill="#eaf0f8" stroke="#a8bcd4" stroke-width=".6"/><path d="M1.5 2.8 H4.1" stroke="#8fa6c4" stroke-width=".6"/></g>
<g transform="translate(185.20 114.60)"><circle cx="2.8" cy="2.8" r="2.4" fill="#eaf0f8" stroke="#a8bcd4" stroke-width=".6"/><path d="M1.5 2.8 H4.1" stroke="#8fa6c4" stroke-width=".6"/></g>
<g transform="translate(185.20 152.40)"><circle cx="2.8" cy="2.8" r="2.4" fill="#eaf0f8" stroke="#a8bcd4" stroke-width=".6"/><path d="M1.5 2.8 H4.1" stroke="#8fa6c4" stroke-width=".6"/></g>
<g transform="translate(185.20 237.45)"><circle cx="2.8" cy="2.8" r="2.4" fill="#eaf0f8" stroke="#a8bcd4" stroke-width=".6"/><path d="M1.5 2.8 H4.1" stroke="#8fa6c4" stroke-width=".6"/></g>
<g transform="translate(185.20 294.15)"><circle cx="2.8" cy="2.8" r="2.4" fill="#eaf0f8" stroke="#a8bcd4" stroke-width=".6"/><path d="M1.5 2.8 H4.1" stroke="#8fa6c4" stroke-width=".6"/></g>
<g transform="translate(185.20 341.40)"><circle cx="2.8" cy="2.8" r="2.4" fill="#eaf0f8" stroke="#a8bcd4" stroke-width=".6"/><path d="M1.5 2.8 H4.1" stroke="#8fa6c4" stroke-width=".6"/></g>
<g transform="translate(185.20 426.45)"><circle cx="2.8" cy="2.8" r="2.4" fill="#eaf0f8" stroke="#a8bcd4" stroke-width=".6"/><path d="M1.5 2.8 H4.1" stroke="#8fa6c4" stroke-width=".6"/></g>
<rect x="765.10" y="57.00" width="8.20" height="398.80" fill="#f0f0f0"/>
<path d="M765.30 57.00L765.30 455.80" stroke="#e6e6e6" stroke-width="0.5" fill="none"/>
<g transform="translate(767.40 60.60)"><path d="M0 2.2H3.6L1.8 0Z" fill="#505050"/></g>
<g transform="translate(767.40 450.00)"><path d="M0 0H3.6L1.8 2.2Z" fill="#505050"/></g>
<rect x="765.60" y="203.00" width="7.20" height="76.40" fill="url(#vt)" stroke="#a6a6a6" stroke-width="0.6" rx="1.2"/>
<path d="M767.70 239.60L770.70 239.60" stroke="#6a6a6a" stroke-width="0.6" fill="none"/>
<path d="M767.70 241.20L770.70 241.20" stroke="#6a6a6a" stroke-width="0.6" fill="none"/>
<path d="M767.70 242.80L770.70 242.80" stroke="#6a6a6a" stroke-width="0.6" fill="none"/>
<rect x="191.00" y="455.80" width="574.10" height="8.70" fill="#f0f0f0"/>
<path d="M191.00 456.00L765.10 456.00" stroke="#e6e6e6" stroke-width="0.5" fill="none"/>
<g transform="translate(194.40 458.35)"><path d="M2.2 0V3.6L0 1.8Z" fill="#505050"/></g>
<g transform="translate(759.50 458.35)"><path d="M0 0V3.6L2.2 1.8Z" fill="#505050"/></g>
<rect x="784.40" y="42.90" width="14.80" height="108.30" fill="#f3f3f3" stroke="#dadada" stroke-width="0.7" rx="3"/>
<path d="M787.00 46.10L796.60 46.10" stroke="#b0b0b0" stroke-width="0.8" stroke-dasharray=".8 .9" fill="none"/>
<rect x="784.40" y="153.40" width="14.80" height="38.40" fill="#f3f3f3" stroke="#dadada" stroke-width="0.7" rx="3"/>
<path d="M787.00 156.60L796.60 156.60" stroke="#b0b0b0" stroke-width="0.8" stroke-dasharray=".8 .9" fill="none"/>
<g transform="translate(786.40 50.90)"><rect x="4" y="2.8" width="3.4" height="2.8" fill="#fff" stroke="#666" stroke-width=".5"/><rect x="4" y="2.8" width="3.4" height=".8" fill="#666"/><rect x="2.8" y="4.4" width="3.4" height="2.8" fill="#fff" stroke="#666" stroke-width=".5"/><rect x="2.8" y="4.4" width="3.4" height=".8" fill="#666"/></g>
<g transform="translate(786.40 62.80)"><rect x="1.4" y="1" width="7" height="8" fill="#eef2fa" stroke="#5878b0" stroke-width=".6"/><circle cx="5" cy="3.4" r="1.5" fill="#d84a3a"/><path d="M2.6 8 C2.6 5.4 7.4 5.4 7.4 8Z" fill="#d8a02c"/></g>
<g transform="translate(786.40 75.00)"><circle cx="5" cy="5" r="3.2" fill="#e4eefb" stroke="#6a9ad8" stroke-width=".7"/><path d="M3.6 5 A1.5 1.5 0 1 1 5 6.5" fill="none" stroke="#5a8ad0" stroke-width=".7"/></g>
<g transform="translate(786.40 87.30)"><path d="M1.6 .8 H6 L7.8 2.6 V9 H1.6Z" fill="#fbfbf0" stroke="#8a8a6a" stroke-width=".6"/><circle cx="6.6" cy="7" r="2" fill="#e6a52c" stroke="#a8741a" stroke-width=".4"/><path d="M3 3.4 H6 M3 5 H5" stroke="#5878b0" stroke-width=".6"/></g>
<g transform="translate(786.40 99.50)"><rect x="1" y="1.8" width="8" height="6.6" fill="#eef2fa" stroke="#5878b0" stroke-width=".7"/><path d="M1 3.8 H9 M3.6 3.8 V8.4" stroke="#5878b0" stroke-width=".6"/></g>
<g transform="translate(786.40 111.50)"><circle cx="4.4" cy="5.8" r="3" fill="#fff" stroke="#3f74c0" stroke-width=".9"/><path d="M5.8 4.8 A1.7 1.7 0 1 0 5.8 6.8" fill="none" stroke="#d8a02c" stroke-width=".9"/><path d="M5 1.4 H9" stroke="#5878b0" stroke-width=".8"/></g>
<g transform="translate(786.40 123.70)"><path d="M1.4 3 L3.4 1 L5.4 3 L3.4 5Z" fill="#3fa34f"/><path d="M5 3.4 L7 1.4 L9 3.4 L7 5.4Z" fill="#d8a02c"/><path d="M2 8.4 h2 M3 5.8 v3 M5.6 8.6 h3.2 M6 6 h2 v2.6" stroke="#3b4fa0" stroke-width=".7" fill="none"/></g>
<g transform="translate(786.40 136.30)"><rect x="1.2" y="1.2" width="7.6" height="7.6" rx=".8" fill="#3f62a8" stroke="#1f3a78" stroke-width=".5"/><rect x="2.6" y="2.8" width="4.8" height="3.6" fill="#dfeafa"/><path d="M3.4 4 l1 .8 l-1 .8" stroke="#1f3a78" stroke-width=".5" fill="none"/></g>
<g transform="translate(786.40 161.00)"><rect x="4" y="2.8" width="3.4" height="2.8" fill="#fff" stroke="#666" stroke-width=".5"/><rect x="4" y="2.8" width="3.4" height=".8" fill="#666"/><rect x="2.8" y="4.4" width="3.4" height="2.8" fill="#fff" stroke="#666" stroke-width=".5"/><rect x="2.8" y="4.4" width="3.4" height=".8" fill="#666"/></g>
<g transform="translate(786.40 173.40)"><rect x="1" y="1" width="3" height="3" fill="#fff" stroke="#3f74c0" stroke-width=".7"/><rect x="1" y="6" width="3" height="3" fill="#fff" stroke="#3f74c0" stroke-width=".7"/><path d="M5.4 1.6 H9 M5.4 3.4 H8 M5.4 6.6 H9 M5.4 8.4 H8" stroke="#3f74c0" stroke-width=".7"/></g>
<path d="M4.20 468.20L4.20 480.40" stroke="#bdbdbd" stroke-width="1" stroke-dasharray=".95 .95" fill="none"/>
<path d="M5.10 469.00L5.10 481.20" stroke="#fdfdfd" stroke-width="0.8" stroke-dasharray=".95 .95" fill="none"/>
<g transform="translate(9.60 468.40)"><rect x="1" y="2" width="3.6" height="6.8" fill="#fdfdf6" stroke="#7f8698" stroke-width=".6"/><rect x="1" y="2" width="3.6" height="1.4" fill="#4a6fb5"/><path d="M6.6 .6 L7.1 1.8 L8.4 2 L7.4 2.8 L7.7 4 L6.6 3.4 L5.5 4 L5.8 2.8 L4.8 2 L6.1 1.8Z" fill="#f2c42c" stroke="#b8860b" stroke-width=".3"/></g>
<path d="M471.60 467.60L471.60 483.00" stroke="#c2c2c2" stroke-width="0.8" fill="none"/>
<path d="M472.40 467.60L472.40 483.00" stroke="#fbfbfb" stroke-width="0.6" fill="none"/>
<path d="M529.60 467.60L529.60 483.00" stroke="#c2c2c2" stroke-width="0.8" fill="none"/>
<path d="M530.40 467.60L530.40 483.00" stroke="#fbfbfb" stroke-width="0.6" fill="none"/>
<path d="M584.00 467.60L584.00 483.00" stroke="#c2c2c2" stroke-width="0.8" fill="none"/>
<path d="M584.80 467.60L584.80 483.00" stroke="#fbfbfb" stroke-width="0.6" fill="none"/>
<path d="M640.60 468.00L640.60 482.00" stroke="#bdbdbd" stroke-width="1" stroke-dasharray=".95 .95" fill="none"/>
<path d="M641.50 468.80L641.50 482.80" stroke="#fdfdfd" stroke-width="0.8" stroke-dasharray=".95 .95" fill="none"/>
</svg>
<div class="t" style="left:12.40px;top:1.40px;color:#161616;transform:scaleX(0.885);">Java - EnhancedQuotes/src/com/gregjacobs/enhancedquotes/QuotesDBAdapter.java - Eclipse Platform</div>
<div class="t" style="left:3.70px;top:12.60px;color:#000;transform:scaleX(0.827);"><u>F</u>ile</div>
<div class="t" style="left:22.00px;top:12.60px;color:#000;transform:scaleX(0.850);"><u>E</u>dit</div>
<div class="t" style="left:40.80px;top:12.60px;color:#000;transform:scaleX(0.814);"><u>R</u>un</div>
<div class="t" style="left:60.00px;top:12.60px;color:#000;transform:scaleX(0.842);"><u>S</u>ource</div>
<div class="t" style="left:88.00px;top:12.60px;color:#000;transform:scaleX(0.878);"><u>N</u>avigate</div>
<div class="t" style="left:121.80px;top:12.60px;color:#000;transform:scaleX(0.808);">Se<u>a</u>rch</div>
<div class="t" style="left:149.00px;top:12.60px;color:#000;transform:scaleX(0.878);"><u>P</u>roject</div>
<div class="t" style="left:177.50px;top:12.60px;color:#000;transform:scaleX(0.846);">Refac<u>t</u>or</div>
<div class="t" style="left:209.50px;top:12.60px;color:#000;transform:scaleX(0.911);"><u>W</u>indow</div>
<div class="t" style="left:241.80px;top:12.60px;color:#000;transform:scaleX(0.887);"><u>H</u>elp</div>
<div class="t" style="left:132.60px;top:27.60px;color:#000;transform:scaleX(0.892);">start client</div>
<div class="t" style="left:169.60px;top:27.60px;color:#000;transform:scaleX(0.840);">start server</div>
<div class="t" style="left:771.40px;top:27.90px;color:#000;transform:scaleX(0.783);">Java</div>
<div class="t" style="left:15.60px;top:44.60px;color:#000;transform:scaleX(0.834);">Package Explorer</div>
<div class="t" style="left:100.00px;top:44.60px;color:#000;transform:scaleX(0.872);">Hierarchy</div>
<div class="a" style="left:0;top:69.4px;width:160.3px;height:386.6px;overflow:hidden"><div class="t" style="left:27.70px;top:0.60px;color:#000;transform:scaleX(0.879);">AdvancedRandomQuotes</div><div class="t" style="left:27.70px;top:10.60px;color:#000;transform:scaleX(0.871);">DatabaseAndroid</div><div class="t" style="left:27.70px;top:20.60px;color:#000;transform:scaleX(0.874);">DatabaseHelloWorld</div><div class="t" style="left:27.70px;top:30.60px;color:#000;transform:scaleX(0.863);">EnhancedQuotes</div><div class="t" style="left:38.32px;top:40.60px;color:#000;transform:scaleX(0.820);">src</div><div class="t" style="left:48.94px;top:50.60px;color:#000;transform:scaleX(0.880);">com.gregjacobs.enhancedquotes</div><div class="t" style="left:59.56px;top:60.60px;color:#000;transform:scaleX(0.864);">QuoteEdit.java</div><div class="t" style="left:59.56px;top:70.60px;color:#000;transform:scaleX(0.852);">QuotesDBAdapter.java</div><div class="t" style="left:70.18px;top:80.60px;color:#000;transform:scaleX(0.862);">QuotesDBAdapter</div><div class="t" style="left:80.80px;top:90.60px;color:#000;transform:scaleX(0.839);">DatabaseHelper</div><div class="t" style="left:80.80px;top:100.60px;color:#000;transform:scaleX(0.799);">DATABASE_CREATE</div><div class="t" style="left:80.80px;top:110.60px;color:#000;transform:scaleX(0.826);">DATABASE_NAME</div><div class="t" style="left:80.80px;top:120.60px;color:#000;transform:scaleX(0.811);">DATABASE_TABLE</div><div class="t" style="left:80.80px;top:130.60px;color:#000;transform:scaleX(0.797);">DATABASE_VERSION</div><div class="t" style="left:80.80px;top:140.60px;color:#000;transform:scaleX(0.757);">KEY_QUOTES</div><div class="t" style="left:80.80px;top:150.60px;color:#000;transform:scaleX(0.766);">KEY_ROWID</div><div class="t" style="left:80.80px;top:160.60px;color:#000;transform:scaleX(0.904);">random</div><div class="t" style="left:80.80px;top:170.60px;color:#000;transform:scaleX(0.840);">TAG</div><div class="t" style="left:80.80px;top:180.60px;color:#000;transform:scaleX(0.886);">mCtx</div><div class="t" style="left:80.80px;top:190.60px;color:#000;transform:scaleX(0.899);">mDb</div><div class="t" style="left:80.80px;top:200.60px;color:#000;transform:scaleX(0.896);">mDbHelper</div><div class="t" style="left:80.80px;top:210.60px;color:#000;transform:scaleX(0.867);">QuotesDBAdapter(Context)</div><div class="t" style="left:80.80px;top:220.60px;color:#000;transform:scaleX(0.866);">close()</div><div class="t" style="left:100.30px;top:220.60px;color:#a0966e;transform:scaleX(0.849);text-shadow:none;"> : void</div><div class="t" style="left:80.80px;top:230.60px;color:#000;transform:scaleX(0.873);">createQuote(String)</div><div class="t" style="left:138.30px;top:230.60px;color:#a0966e;transform:scaleX(0.856);text-shadow:none;"> : long</div><div class="t" style="left:80.80px;top:240.60px;color:#000;transform:scaleX(0.891);">deleteQuote(long)</div><div class="t" style="left:134.30px;top:240.60px;color:#a0966e;transform:scaleX(0.789);text-shadow:none;"> : boolean</div><div class="t" style="left:80.80px;top:250.60px;color:#000;transform:scaleX(0.902);">fetchAllQuotes()</div><div class="t" style="left:129.30px;top:250.60px;color:#a0966e;transform:scaleX(0.834);text-shadow:none;"> : Cursor</div><div class="t" style="left:80.80px;top:260.60px;color:#000;transform:scaleX(0.904);">fetchQuote(long)</div><div class="t" style="left:131.30px;top:260.60px;color:#a0966e;transform:scaleX(0.834);text-shadow:none;"> : Cursor</div><div class="t" style="left:80.80px;top:270.60px;color:#000;transform:scaleX(0.870);">getAllEntries()</div><div class="t" style="left:121.80px;top:270.60px;color:#a0966e;transform:scaleX(0.916);text-shadow:none;"> : int</div><div class="t" style="left:80.80px;top:280.60px;color:#000;transform:scaleX(0.873);">getRandomEntry()</div><div class="t" style="left:134.30px;top:280.60px;color:#a0966e;transform:scaleX(0.851);text-shadow:none;"> : String</div><div class="t" style="left:80.80px;top:290.60px;color:#000;transform:scaleX(0.830);">open()</div><div class="t" style="left:98.80px;top:290.60px;color:#a0966e;transform:scaleX(0.879);text-shadow:none;"> : QuotesDBAdapter</div><div class="t" style="left:80.80px;top:300.60px;color:#000;transform:scaleX(0.886);">updateQuote(long, String)</div><div class="t" style="left:157.30px;top:300.60px;color:#a0966e;transform:scaleX(0.856);text-shadow:none;"> : long</div><div class="t" style="left:59.56px;top:310.60px;color:#000;transform:scaleX(0.875);">QuotesMain.java</div><div class="t" style="left:38.32px;top:320.60px;color:#000;transform:scaleX(0.799);">gen</div><div class="t" style="left:48.32px;top:320.60px;color:#a0966e;transform:scaleX(0.845);text-shadow:none;"> [Generated Java Files]</div><div class="t" style="left:38.32px;top:330.60px;color:#000;transform:scaleX(0.879);">Android 1.5</div><div class="t" style="left:38.32px;top:340.60px;color:#000;transform:scaleX(0.784);">assets</div><div class="t" style="left:38.32px;top:350.60px;color:#000;transform:scaleX(0.768);">res</div><div class="t" style="left:38.32px;top:360.60px;color:#000;transform:scaleX(0.909);">AndroidManifest.xml</div><div class="t" style="left:38.32px;top:370.60px;color:#000;transform:scaleX(0.884);">default.properties</div><div class="t" style="left:27.70px;top:380.60px;color:#000;transform:scaleX(0.904);">gregjacobs.info</div></div>
<div class="t" style="left:186.40px;top:44.60px;color:#000;transform:scaleX(0.862);">QuoteEdit.java</div>
<div class="t" style="left:256.60px;top:44.60px;color:#000;transform:scaleX(0.852);">QuotesDBAdapter.java</div>
<div class="a" style="left:181px;top:57.0px;width:584px;height:398.8px;overflow:hidden"><div class="code" style="left:27.8px;top:0.57px"><span class="c">/**</span>
<span class="c"> * Constructor - takes the context to allow the database to be</span>
<span class="c"> * opened/created</span>
<span class="c"> * </span>
<span class="c"> * <span class="jt">@param</span> ctx the Context within which to work</span>
<span class="c"> */</span>
<span class="k">public</span> QuotesDBAdapter(Context ctx) {
    <span class="k">this</span>.<span class="f">mCtx</span> = ctx;
}

<span class="c">/**</span>
<span class="c"> * Open the notes database. If it cannot be opened, try to create a new</span>
<span class="c"> * instance of the database. If it cannot be created, throw an exception to</span>
<span class="c"> * signal the failure</span>
<span class="c"> * </span>
<span class="c"> * <span class="jt">@return</span> this (self reference, allowing this to be chained in an</span>
<span class="c"> *         <span class="sp">initialization</span> call)</span>
<span class="c"> * <span class="jt">@throws</span> SQLException if the database could be neither opened or created</span>
<span class="c"> */</span>
<span class="k">public</span> QuotesDBAdapter open() <span class="k">throws</span> SQLException {
    <span class="f">mDbHelper</span> = <span class="k">new</span> DatabaseHelper(<span class="f">mCtx</span>);
    <span class="f">mDb</span> = <span class="f">mDbHelper</span>.getWritableDatabase();
    <span class="k">return</span> <span class="k">this</span>;
}

<span class="k">public</span> <span class="k">void</span> close() {
    <span class="f">mDbHelper</span>.close();
}


<span class="c">/**</span>
<span class="c"> * Create a new note using the title and body provided. If the note is</span>
<span class="c"> * successfully created return the new rowId for that note, otherwise return</span>
<span class="c"> * a -1 to indicate failure.</span>
<span class="c"> * </span>
<span class="c"> * <span class="jt">@param</span> title the title of the note</span>
<span class="c"> * <span class="jt">@param</span> body the body of the note</span>
<span class="c"> * <span class="jt">@return</span> rowId or -1 if failed</span>
<span class="c"> */</span>
<span class="k">public</span> <span class="k">long</span> createQuote(String quotes) {
    ContentValues initialValues = <span class="k">new</span> ContentValues();
    initialValues.put(<span class="sf">KEY_QUOTES</span>, quotes);</div></div>
<div class="t" style="left:476.00px;top:470.00px;color:#000;transform:scaleX(0.913);">Writable</div>
<div class="t" style="left:533.80px;top:470.00px;color:#000;transform:scaleX(0.862);">Smart Insert</div>
<div class="t" style="left:587.80px;top:470.00px;color:#000;transform:scaleX(0.836);">1 : 3</div>
</body></html>
